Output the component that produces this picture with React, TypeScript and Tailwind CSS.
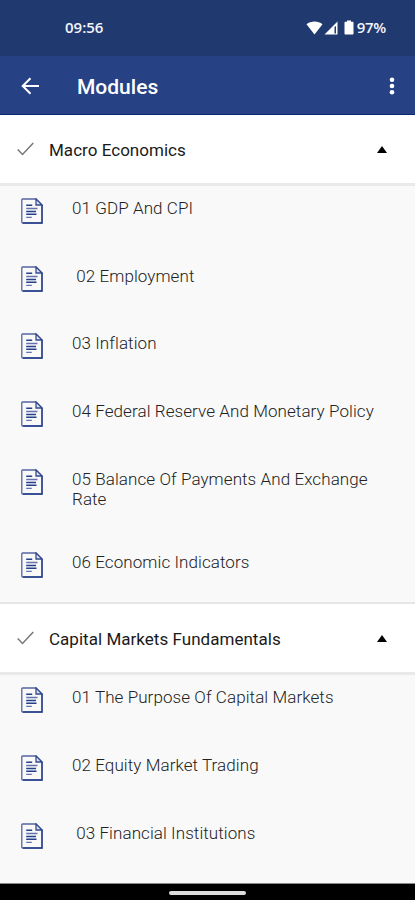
import React from 'react';

interface Module {
  title: string;
  lessons: string[];
}

const modules: Module[] = [
  {
    title: 'Macro Economics',
    lessons: [
      '01 GDP And CPI',
      ' 02 Employment',
      '03 Inflation',
      '04 Federal Reserve And Monetary Policy',
      '05 Balance Of Payments And Exchange Rate',
      '06 Economic Indicators',
    ],
  },
  {
    title: 'Capital Markets Fundamentals',
    lessons: [
      '01 The Purpose Of Capital Markets',
      '02 Equity Market Trading',
      ' 03 Financial Institutions',
    ],
  },
];

const DocumentIcon: React.FC = () => (
  <svg width="22" height="26" viewBox="0 0 22 26" fill="none" className="shrink-0">
    <path d="M15 1H1.5a.7.7 0 0 0-.7.7v22.6a.7.7 0 0 0 .7.7H21V7Z" stroke="#5564a0" strokeWidth="1.3" />
    <path d="M21 7v18H2" stroke="#25408a" strokeWidth="1.4" />
    <path d="M15 1v6h6Z" fill="#dfe3f1" stroke="#344b91" strokeWidth="1.3" />
    <path d="M5.2 7.2h6M5.2 13.5h9.8M5.2 16.2h10.3" stroke="#25408a" strokeWidth="1.5" />
    <path d="M5.2 10.5h11.3M5.2 19.3h5.6" stroke="#6673aa" strokeWidth="1.3" />
  </svg>
);

const StatusBar: React.FC = () => (
  <div className="flex h-14 shrink-0 items-center justify-between bg-[#203a70] pr-[29px] pb-px pl-[65px] font-['Open_Sans',sans-serif] text-[15px] font-semibold text-[#f4f5fa]">
    <span>09:56</span>
    <div className="flex items-center">
      <svg width="17" height="14" viewBox="0 0 17 14" fill="white">
        <path d="M.5 3.3C4.8-.4 12.2-.4 16.5 3.3L8.5 13.5Z" />
      </svg>
      <svg width="14" height="14" viewBox="0 0 14 14" className="ml-px">
        <path d="M13.5.5V13.5H.5Z" fill="white" />
        <path d="M10.5 6v6.5h1.5V5Z" fill="#203a70" />
      </svg>
      <svg width="10" height="15" viewBox="0 0 10 15" fill="white" className="ml-[6px]">
        <path d="M3 .5h4v1.3h1.5c.6 0 1 .4 1 1v10.7c0 .6-.4 1-1 1h-7c-.6 0-1-.4-1-1V2.8c0-.6.4-1 1-1H3Z" />
      </svg>
      <span className="ml-[3px] tracking-[-0.3px]">97%</span>
    </div>
  </div>
);

const AppBar: React.FC = () => (
  <div className="flex h-[59px] shrink-0 items-center border-b border-[#082575] bg-[#264284] pt-[3px] pr-[20px] pl-[21px] text-white">
    <svg width="19" height="18" viewBox="0 0 19 18" fill="none" stroke="white" strokeWidth="2" className="mb-[2px]">
      <path d="M18 9H2M9.5 1.2 1.7 9l7.8 7.8" />
    </svg>
    <h1 className="ml-[37px] flex-1 pt-[2px] text-[21px] font-medium">Modules</h1>
    <svg width="6" height="20" viewBox="0 0 6 20" fill="white" className="mb-[2px]">
      <circle cx="3" cy="3.8" r="2.3" />
      <circle cx="3" cy="10" r="2.3" />
      <circle cx="3" cy="16.2" r="2.3" />
    </svg>
  </div>
);

const ModuleSection: React.FC<{ module: Module }> = ({ module }) => (
  <section>
    <div className="flex h-[71px] items-center border-b-[3px] border-[#e9e9e9] bg-white pr-[28px] pl-[17px]">
      <svg width="17" height="14" viewBox="0 0 17 14" fill="none" stroke="#777" strokeWidth="1.5">
        <path d="M.7 7.5 5.5 12.5 16.3 1" />
      </svg>
      <h2 className="ml-[15px] flex-1 pt-[3px] text-[17px] tracking-[0.03px] text-[#1a1a1a]">{module.title}</h2>
      <svg width="10" height="7" viewBox="0 0 10 7" fill="black" className="mt-px">
        <path d="M5 0 10 7H0Z" />
      </svg>
    </div>
    <ul>
      {module.lessons.map((lesson) => (
        <li key={lesson} className="flex min-h-[67.7px] items-start pt-3 pr-8 pl-[21px] last:min-h-[62.2px]">
          <DocumentIcon />
          <span className="ml-[29px] pb-[31.2px] text-[17px] leading-5 font-light tracking-[0.08px] whitespace-pre-wrap text-[#222] in-[li:last-child]:pb-0">
            {lesson}
          </span>
        </li>
      ))}
    </ul>
  </section>
);

const App: React.FC = () => {
  return (
    <div className="flex h-[900px] w-[415px] flex-col overflow-hidden bg-[#f9f9f9] font-[Roboto,sans-serif]">
      <StatusBar />
      <AppBar />
      <main className="min-h-0 flex-1 divide-y-2 divide-[#e6e6e6] overflow-hidden">
        {modules.map((module) => (
          <ModuleSection key={module.title} module={module} />
        ))}
      </main>
      {/* Gesture navigation bar */}
      <div className="flex h-[17px] shrink-0 items-center justify-center border-t border-[#888] bg-black pt-px">
        <div className="h-1 w-[77px] rounded-full bg-[#ddd]" />
      </div>
    </div>
  );
};

export default App;
